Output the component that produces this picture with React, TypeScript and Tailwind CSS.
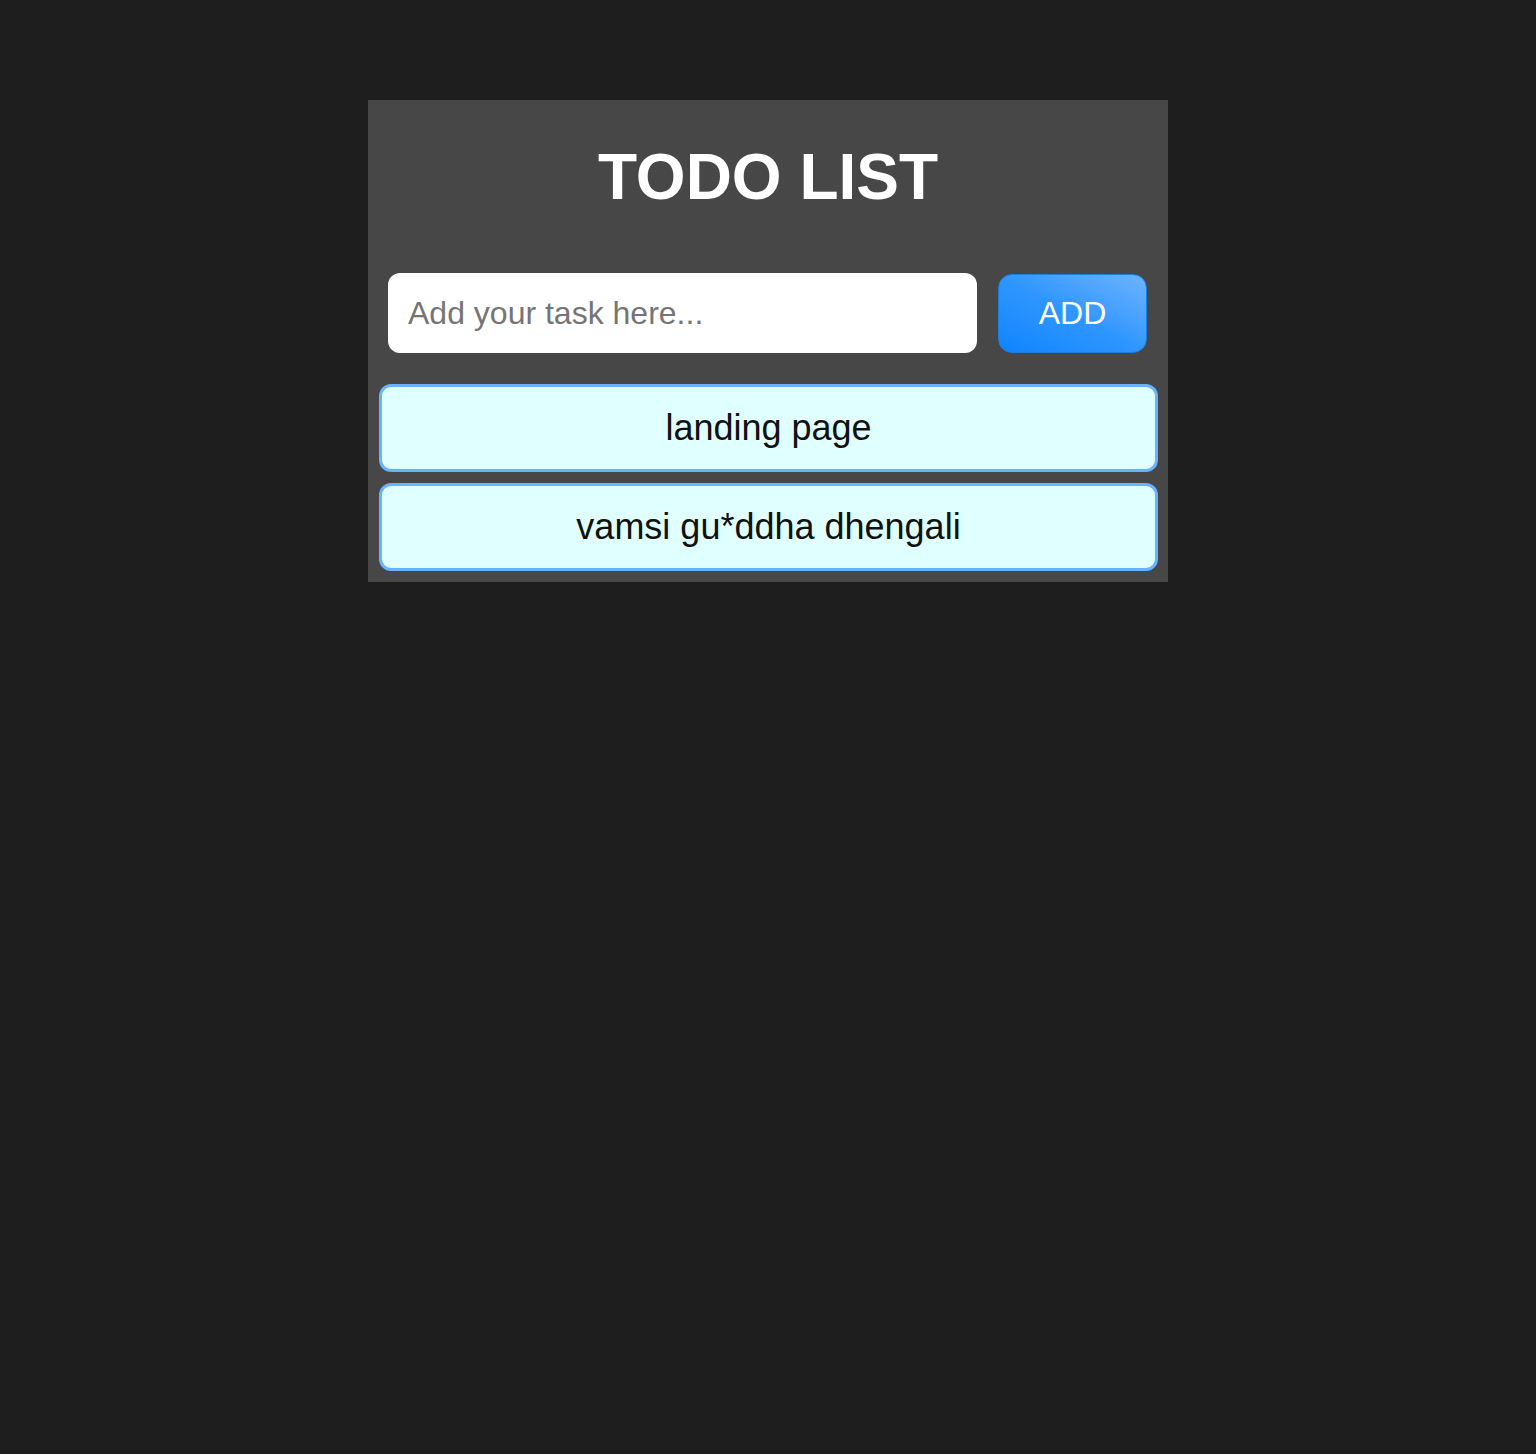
import { useState } from "react";

export default function App() {
  const [task, setTask] = useState("");
  const [todos, setTodos] = useState<string[]>(["landing page", "vamsi gu*ddha dhengali"]);

  const addTodo = () => {
    if (!task.trim()) return;
    setTodos([...todos, task.trim()]);
    setTask("");
  };

  return (
    <div className="min-h-screen bg-[#1e1e1e] pt-[100px] font-['Liberation_Sans',Arial,sans-serif]">
      <div className="mx-auto w-[800px] bg-[#474747] pt-[45px] pb-[11px]">
        <h1 className="text-center text-[64px] leading-[64px] font-bold text-white">TODO LIST</h1>

        <div className="mt-[64px] flex items-center pl-[20px] pr-[21px]">
          <input
            value={task}
            onChange={(e) => setTask(e.target.value)}
            placeholder="Add your task here..."
            className="h-[80px] w-[589px] rounded-[12px] bg-white px-[20px] text-[32px] text-black outline-none placeholder:text-[#757575]"
          />
          <button
            onClick={addTodo}
            className="ml-[21px] h-[79px] w-[149px] rounded-[14px] border border-[#1c7fe0] bg-gradient-to-tr from-[#0a84ff] via-[#2f96ff] to-[#6cb4ff] text-[32px] text-white"
          >
            ADD
          </button>
        </div>

        <ul className="mt-[31px] flex flex-col gap-[11px] pl-[11px]">
          {todos.map((t, i) => (
            <li
              key={i}
              className="flex h-[88px] w-[779px] items-center justify-center rounded-[12px] border-[3px] border-[#66b3ff] bg-[#e0ffff] text-[36px] text-[#111111]"
            >
              {t}
            </li>
          ))}
        </ul>
      </div>
    </div>
  );
}
